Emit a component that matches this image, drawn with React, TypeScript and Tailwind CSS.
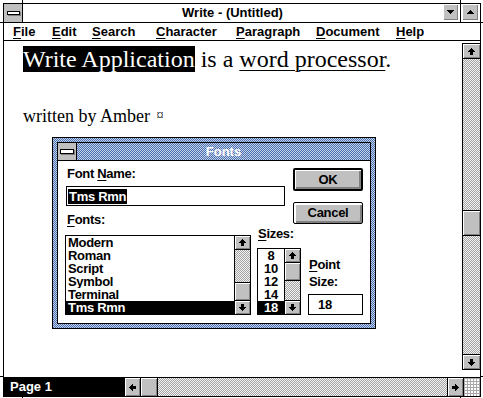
import React from "react";

type R = [number, number, number, number];

function Pix({ w, h, r }: { w: number; h: number; r: R[] }) {
  return (
    <svg width={w} height={h} viewBox={`0 0 ${w} ${h}`} shapeRendering="crispEdges" className="block">
      {r.map(([x, y, rw, rh], i) => (
        <rect key={i} x={x} y={y} width={rw} height={rh} fill="#000" />
      ))}
    </svg>
  );
}

const UP: R[] = [[3, 0, 1, 1], [2, 1, 3, 1], [1, 2, 5, 1], [0, 3, 7, 1], [2, 4, 3, 3]];
const DOWN: R[] = [[2, 0, 3, 3], [0, 3, 7, 1], [1, 4, 5, 1], [2, 5, 3, 1], [3, 6, 1, 1]];
const LEFT: R[] = [[0, 3, 1, 1], [1, 2, 1, 3], [2, 1, 1, 5], [3, 0, 1, 7], [4, 2, 3, 3]];
const RIGHT: R[] = [[0, 2, 3, 3], [3, 0, 1, 7], [4, 1, 1, 5], [5, 2, 1, 3], [6, 3, 1, 1]];
const TRI_DOWN: R[] = [[0, 0, 7, 1], [1, 1, 5, 1], [2, 2, 3, 1], [3, 3, 1, 1]];
const TRI_UP: R[] = [[3, 0, 1, 1], [2, 1, 3, 1], [1, 2, 5, 1], [0, 3, 7, 1]];

const BEVEL = "bg-[#c0c0c0] shadow-[inset_1px_1px_0_#ffffff,inset_-1px_-1px_0_#808080]";
const DITHER_GRAY = "bg-[image:repeating-conic-gradient(#a4a4a4_0_25%,#f2f2f2_0_50%)] bg-[length:2px_2px]";
const DITHER_BLUE = "bg-[image:repeating-conic-gradient(#4a70b0_0_25%,#c4d2ea_0_50%)] bg-[length:2px_2px]";

function VScroll({ btn, thumb, className }: { btn: string; thumb: string; className: string }) {
  return (
    <div className={`flex flex-col ${className}`}>
      <div className={`${btn} ${BEVEL} shrink-0 flex items-center justify-center`}>
        <Pix w={7} h={7} r={UP} />
      </div>
      <div className={`flex-1 min-h-0 border-y border-black flex flex-col ${DITHER_GRAY}`}>
        <div className={`${thumb} ${BEVEL} shrink-0`} />
      </div>
      <div className={`${btn} ${BEVEL} shrink-0 flex items-center justify-center`}>
        <Pix w={7} h={7} r={DOWN} />
      </div>
    </div>
  );
}

function U({ children }: { children: React.ReactNode }) {
  return <span className="underline decoration-1 underline-offset-[2px]">{children}</span>;
}

function FontsDialog() {
  const fonts = ["Modern", "Roman", "Script", "Symbol", "Terminal", "Tms Rmn"];
  const sizes = ["8", "10", "12", "14", "18"];
  return (
    <div className={`absolute left-[52px] top-[137px] w-[324px] h-[192px] border border-black p-[4px] ${DITHER_BLUE}`}>
      <div className="w-full h-full border border-black flex flex-col bg-white">
        <div className="h-[18px] border-b border-black flex shrink-0">
          <div className="w-[19px] border-r border-black bg-[#c0c0c0] flex items-center justify-center">
            <div className="w-[14px] h-[5px] bg-white border border-black shadow-[1px_1px_0_#808080]" />
          </div>
          <div className={`flex-1 text-center text-white font-bold text-[13px] leading-[17px] ${DITHER_BLUE}`}>Fonts</div>
        </div>
        <div className="flex-1 flex text-[13px] font-bold tracking-[-0.3px]">
          <div className="w-[235px] shrink-0 flex flex-col">
            <div className="mt-[5px] pl-[9px] leading-[16px]">
              Font <U>N</U>ame:
            </div>
            <div className="mt-[4px] ml-[8px] w-[219px] h-[20px] border border-black flex items-center pl-[1px]">
              <span className="bg-black text-white leading-[15px] h-[15px] px-[1px]">Tms Rmn</span>
            </div>
            <div className="flex items-start mt-[6px]">
              <div className="ml-[7px] w-[186px] shrink-0">
                <div className="pl-[2px] leading-[16px]">
                  <U>F</U>onts:
                </div>
                <div className="mt-[7px] h-[80px] border border-black flex">
                  <div className="flex-1">
                    {fonts.map((f) => (
                      <div
                        key={f}
                        className={`h-[13px] leading-[13px] pl-[2px] overflow-hidden ${f === "Tms Rmn" ? "bg-black text-white" : ""}`}
                      >
                        {f}
                      </div>
                    ))}
                  </div>
                  <VScroll
                    className="w-[16px] border-l border-black"
                    btn="h-[13px]"
                    thumb="mt-[32px] h-[18px] border-t border-black"
                  />
                </div>
              </div>
              <div className="ml-[6px] w-[44px] shrink-0 mt-[14px]">
                <div className="pl-[1px] leading-[16px]">
                  <U>S</U>izes:
                </div>
                <div className="mt-[6px] h-[67px] border border-black flex">
                  <div className="flex-1">
                    {sizes.map((s) => (
                      <div
                        key={s}
                        className={`h-[13px] leading-[13px] text-center overflow-hidden ${s === "18" ? "bg-black text-white" : ""}`}
                      >
                        {s}
                      </div>
                    ))}
                  </div>
                  <VScroll
                    className="w-[16px] border-l border-black"
                    btn="h-[13px]"
                    thumb="h-[18px] border-b border-black"
                  />
                </div>
              </div>
            </div>
          </div>
          <div className="flex flex-col">
            <div className="mt-[7px] w-[70px] h-[23px] border-2 border-black rounded-[2px] flex items-center justify-center bg-[#c0c0c0] shadow-[inset_1px_1px_0_#ffffff,inset_-2px_-2px_0_#808080]">
              OK
            </div>
            <div className="mt-[11px] w-[70px] h-[22px] border border-black rounded-[2px] flex items-center justify-center bg-[#c0c0c0] shadow-[inset_2px_2px_0_#ffffff,inset_-2px_-2px_0_#808080]">
              Cancel
            </div>
            <div className="mt-[32px] ml-[16px] leading-[17px]">
              <U>P</U>oint
              <br />
              Size:
            </div>
            <div className="mt-[4px] ml-[15px] w-[55px] h-[21px] border border-black pl-[9px] leading-[19px]">18</div>
          </div>
        </div>
      </div>
    </div>
  );
}

export default function App() {
  const menus: [string, string, string][] = [
    ["F", "ile", "w-[39px]"],
    ["E", "dit", "w-[40px]"],
    ["S", "earch", "w-[64px]"],
    ["C", "haracter", "w-[80px]"],
    ["P", "aragraph", "w-[80px]"],
    ["D", "ocument", "w-[80px]"],
    ["H", "elp", "w-[40px]"],
  ];
  return (
    <div className="relative w-[483px] h-[398px] bg-white overflow-hidden pl-[3px] pt-[3px] text-black font-['Liberation_Sans',Arial,sans-serif]">
      <div className="absolute left-[22px] top-0 w-px h-[3px] bg-black" />
      <div className="absolute left-[460px] top-0 w-px h-[3px] bg-black" />
      <div className="absolute left-[22px] bottom-0 w-px h-[2px] bg-black" />
      <div className="absolute left-[460px] bottom-0 w-px h-[2px] bg-black" />
      <div className="absolute left-0 top-[22px] w-[3px] h-px bg-black" />
      <div className="absolute left-0 top-[376px] w-[3px] h-px bg-black" />
      <div className="absolute right-0 top-[22px] w-[2px] h-px bg-black" />
      <div className="absolute right-0 top-[376px] w-[2px] h-px bg-black" />

      <div className="w-[478px] h-[394px] border border-black flex flex-col">
        <div className="h-[19px] border-b border-black flex shrink-0">
          <div className="w-[19px] border-r border-black bg-[#c0c0c0] flex items-center justify-center">
            <div className="w-[13px] h-[4px] bg-white border border-black shadow-[1px_1px_0_#808080]" />
          </div>
          <div className="flex-1 text-center font-bold text-[13px] leading-[18px]">Write - (Untitled)</div>
          <div className="w-[18px]">
            <div className={`ml-[1px] w-[15px] h-[16px] ${BEVEL} flex items-center justify-center`}>
              <Pix w={7} h={4} r={TRI_DOWN} />
            </div>
          </div>
          <div className="w-[20px] border-l border-black">
            <div className={`ml-[1px] w-[16px] h-[16px] ${BEVEL} flex items-center justify-center`}>
              <Pix w={7} h={4} r={TRI_UP} />
            </div>
          </div>
        </div>

        <div className="h-[18px] border-b border-black flex items-center pl-[9px] text-[13px] font-bold leading-[17px] shrink-0">
          {menus.map(([a, b, w]) => (
            <div key={a + b} className={w}>
              <U>{a}</U>
              {b}
            </div>
          ))}
        </div>

        <div className="h-[336px] flex shrink-0">
          <div className="flex-1 pl-[19px] pt-[5px] font-['Liberation_Serif','Times_New_Roman',serif]">
            <p className="text-[24px] leading-[27px] whitespace-nowrap">
              <span className="bg-black text-white">Write Application</span> is a{" "}
              <span className="underline decoration-1 underline-offset-[3px]">word processor</span>.
            </p>
            <p className="mt-[33px] text-[18px] leading-[20px] whitespace-nowrap">
              written by Amber <span className="text-[14px] align-[2px] ml-[2px]">¤</span>
            </p>
          </div>
          <div className="w-[18px] pt-[2px] pb-[7px] flex">
            <VScroll
              className="flex-1 border-l border-t border-b border-black"
              btn="h-[14px]"
              thumb="mt-[151px] h-[26px] border-y border-black"
            />
          </div>
        </div>

        <div className="h-[19px] border-t border-black flex shrink-0">
          <div className="w-[121px] bg-black text-white font-bold text-[13px] leading-[18px] pl-[6px]">Page 1</div>
          <div className={`w-[15px] ${BEVEL} flex items-center justify-center`}>
            <Pix w={7} h={7} r={LEFT} />
          </div>
          <div className={`w-[18px] border-x border-black ${BEVEL}`} />
          <div className={`flex-1 ${DITHER_GRAY}`} />
          <div className={`w-[16px] border-l border-black ${BEVEL} flex items-center justify-center`}>
            <Pix w={7} h={7} r={RIGHT} />
          </div>
          <div className="w-[17px] border-l border-black bg-[image:linear-gradient(90deg,#a8a8a8_1px,transparent_1px),linear-gradient(#a8a8a8_1px,#ffffff_1px)] bg-[length:3px_3px]" />
        </div>
      </div>

      <FontsDialog />
    </div>
  );
}
